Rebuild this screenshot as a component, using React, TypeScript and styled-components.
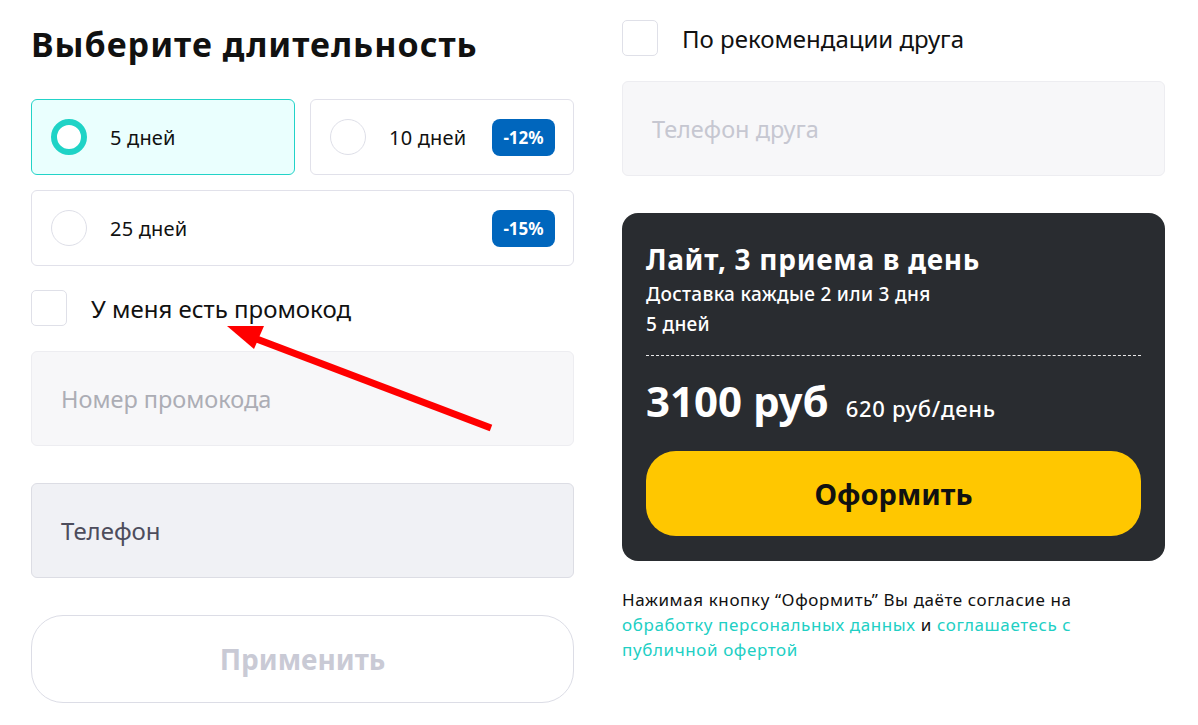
import React, { useState } from "react";
import styled, { createGlobalStyle } from "styled-components";

type Duration = { id: number; label: string; discount?: string; wide?: boolean };

const durations: Duration[] = [
  { id: 5, label: "5 дней" },
  { id: 10, label: "10 дней", discount: "-12%" },
  { id: 25, label: "25 дней", discount: "-15%", wide: true },
];

const App: React.FC = () => {
  const [selected, setSelected] = useState(5);

  return (
    <>
      <GlobalStyle />
      <Page>
        <Column>
          <Title>Выберите длительность</Title>

          <OptionsGrid>
            {durations.map((d) => (
              <OptionCard
                key={d.id}
                $active={selected === d.id}
                $wide={d.wide}
                onClick={() => setSelected(d.id)}
              >
                <Radio $active={selected === d.id} />
                <OptionLabel>{d.label}</OptionLabel>
                {d.discount && <Badge>{d.discount}</Badge>}
              </OptionCard>
            ))}
          </OptionsGrid>

          <CheckRow $top={24}>
            <CheckBox />
            <CheckLabel>У меня есть промокод</CheckLabel>
            {/* red annotation arrow */}
            <Arrow width="300" height="130" viewBox="0 0 300 130">
              <line x1="294" y1="126" x2="52" y2="34" stroke="#ff0000" strokeWidth="7" />
              <polygon points="30,24 67,24 57,47" fill="#ff0000" />
            </Arrow>
          </CheckRow>

          <Field $top={25} $variant="empty">
            <Placeholder>Номер промокода</Placeholder>
          </Field>

          <Field $top={37} $variant="filled">
            <FieldValue>Телефон</FieldValue>
          </Field>

          <GhostButton>Применить</GhostButton>
        </Column>

        <Column $top={20}>
          <CheckRow>
            <CheckBox />
            <CheckLabel>По рекомендации друга</CheckLabel>
          </CheckRow>

          <Field $top={25} $variant="empty">
            <Placeholder $light>Телефон друга</Placeholder>
          </Field>

          <SummaryCard>
            <PlanTitle>Лайт, 3 приема в день</PlanTitle>
            <PlanMeta>Доставка каждые 2 или 3 дня</PlanMeta>
            <PlanMeta>5 дней</PlanMeta>
            <Divider />
            <PriceRow>
              <Price>3100 руб</Price>
              <PerDay>620 руб/день</PerDay>
            </PriceRow>
            <OrderButton>Оформить</OrderButton>
          </SummaryCard>

          <Legal>
            Нажимая кнопку “Оформить” Вы даёте согласие на
            <br />
            <LegalLink>обработку персональных данных</LegalLink> и{" "}
            <LegalLink>соглашаетесь с</LegalLink>
            <br />
            <LegalLink>публичной офертой</LegalLink>
          </Legal>
        </Column>
      </Page>
    </>
  );
};

/* ================== STYLED COMPONENTS ================== */

const GlobalStyle = createGlobalStyle`
  body {
    margin: 0;
    background: #fff;
    font-family: "Noto Sans", "Open Sans", sans-serif;
    color: #111;
  }
`;

const Page = styled.div`
  display: flex;
  gap: 48px;
  padding-left: 31px;
  width: 1198px;
  height: 725px;
  box-sizing: border-box;
  overflow: hidden;
`;

const Column = styled.div<{ $top?: number }>`
  width: 543px;
  display: flex;
  flex-direction: column;
  padding-top: ${({ $top }) => $top ?? 0}px;
`;

const Title = styled.h1`
  margin: 21px 0 0;
  font-size: 34px;
  line-height: 46px;
  font-weight: 700;
  letter-spacing: 1px;
  color: #111;
`;

const OptionsGrid = styled.div`
  margin-top: 32px;
  display: grid;
  grid-template-columns: 1fr 1fr;
  gap: 15px;
`;

const OptionCard = styled.div<{ $active: boolean; $wide?: boolean }>`
  grid-column: ${({ $wide }) => ($wide ? "1 / span 2" : "auto")};
  height: 76px;
  box-sizing: border-box;
  display: flex;
  align-items: center;
  padding: 0 18px 0 19px;
  border-radius: 6px;
  border: 1px solid ${({ $active }) => ($active ? "#22d3c8" : "#e1e1ea")};
  background: ${({ $active }) => ($active ? "#eafffe" : "#fff")};
  cursor: pointer;
`;

const Radio = styled.span<{ $active: boolean }>`
  width: 36px;
  height: 36px;
  box-sizing: border-box;
  border-radius: 50%;
  flex-shrink: 0;
  border: ${({ $active }) => ($active ? "6px solid #1fd3c6" : "1px solid #dedfe8")};
  background: #fff;
`;

const OptionLabel = styled.span`
  margin-left: 23px;
  font-size: 20px;
  letter-spacing: 0.2px;
  color: #111;
  flex: 1;
`;

const Badge = styled.span`
  background: #0066bd;
  color: #fff;
  font-weight: 700;
  font-size: 17px;
  height: 37px;
  width: 63px;
  border-radius: 8px;
  display: flex;
  align-items: center;
  justify-content: center;
`;

const CheckRow = styled.div<{ $top?: number }>`
  position: relative;
  margin-top: ${({ $top }) => $top ?? 0}px;
  display: flex;
  align-items: center;
  gap: 24px;
  height: 36px;
`;

const CheckBox = styled.span`
  width: 36px;
  height: 36px;
  box-sizing: border-box;
  border: 1px solid #dfe0e8;
  border-radius: 5px;
  background: #fff;
`;

const CheckLabel = styled.span`
  font-size: 24px;
  color: #111;
`;

const Arrow = styled.svg`
  position: absolute;
  left: 166px;
  top: 12px;
  overflow: visible;
`;

const Field = styled.div<{ $top: number; $variant: "empty" | "filled" }>`
  margin-top: ${({ $top }) => $top}px;
  height: 95px;
  box-sizing: border-box;
  border-radius: 6px;
  display: flex;
  align-items: center;
  padding-left: 29px;
  background: ${({ $variant }) => ($variant === "filled" ? "#f0f1f5" : "#f7f7f9")};
  border: 1px solid ${({ $variant }) => ($variant === "filled" ? "#dcdde4" : "#ededf1")};
`;

const Placeholder = styled.span<{ $light?: boolean }>`
  font-size: 23.5px;
  color: ${({ $light }) => ($light ? "#c6c7d1" : "#acadb5")};
`;

const FieldValue = styled.span`
  font-size: 24px;
  color: #4d4d5c;
`;

const GhostButton = styled.button`
  margin-top: 37px;
  height: 88px;
  border-radius: 32px;
  border: 1px solid #dcdde6;
  background: #fff;
  font-family: inherit;
  font-size: 28px;
  font-weight: 700;
  color: #c9cad5;
  cursor: default;
`;

const SummaryCard = styled.div`
  margin-top: 37px;
  background: #292c30;
  border-radius: 16px;
  padding: 26px 24px 25px;
  color: #fff;
  display: flex;
  flex-direction: column;
`;

const PlanTitle = styled.div`
  font-size: 28px;
  font-weight: 700;
  line-height: 40px;
  letter-spacing: 0.7px;
`;

const PlanMeta = styled.div`
  font-size: 19px;
  font-weight: 500;
  line-height: 30px;
  letter-spacing: 0.3px;
`;

const Divider = styled.div`
  margin-top: 16px;
  border-top: 1px dashed #ffffff;
  opacity: 0.9;
`;

const PriceRow = styled.div`
  margin-top: 19px;
  display: flex;
  align-items: baseline;
  gap: 17px;
`;

const Price = styled.span`
  font-size: 42px;
  font-weight: 700;
  line-height: 52px;
`;

const PerDay = styled.span`
  font-size: 22px;
  font-weight: 500;
  letter-spacing: 0.7px;
`;

const OrderButton = styled.button`
  margin-top: 24px;
  height: 85px;
  border: none;
  border-radius: 30px;
  background: #ffc700;
  font-family: inherit;
  font-size: 29px;
  font-weight: 700;
  color: #111;
  cursor: pointer;
`;

const Legal = styled.p`
  margin: 26px 0 0;
  font-size: 17px;
  line-height: 25px;
  letter-spacing: 0.6px;
  color: #111;
`;

const LegalLink = styled.a`
  color: #21cfc4;
  text-decoration: none;
  cursor: pointer;
`;

export default App;
